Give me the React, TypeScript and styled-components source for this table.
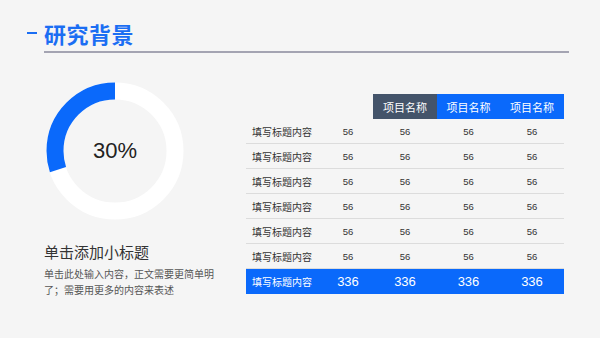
import { Fragment } from 'react';
import styled, { createGlobalStyle } from 'styled-components';

const GlobalStyle = createGlobalStyle`
  html, body {
    margin: 0;
    padding: 0;
    background: #f5f5f5;
  }
  body {
    width: 600px;
    height: 338px;
    overflow: hidden;
    font-family: 'Liberation Sans', 'Noto Sans CJK SC', sans-serif;
  }
`;

const Slide = styled.div`
  width: 600px;
  height: 338px;
  box-sizing: border-box;
  padding: 18px 31px 0 27px;
  display: flex;
  flex-direction: column;
`;

const Header = styled.div`
  display: flex;
  align-items: center;
  gap: 7px;
  height: 30px;
`;

const Dash = styled.div`
  width: 10px;
  height: 2px;
  background: #1b6ef3;
`;

const Title = styled.h1`
  margin: 0;
  font-family: 'Noto Sans CJK SC', sans-serif;
  font-size: 22px;
  font-weight: 700;
  color: #1b6ef3;
  letter-spacing: 0.5px;
  line-height: 30px;
`;

const Rule = styled.div`
  margin: 3px 0 0 17px;
  height: 2px;
  background: #a4a4b2;
`;

const Body = styled.div`
  display: flex;
  align-items: flex-start;
  margin-top: 29px;
`;

const LeftCol = styled.div`
  width: 219px;
  display: flex;
  flex-direction: column;
`;

const Donut = styled.div`
  position: relative;
  width: 138px;
  height: 138px;
  margin: 0 0 0 19px;
`;

const DonutLabel = styled.div`
  position: absolute;
  inset: 0;
  display: flex;
  align-items: center;
  justify-content: center;
  font-size: 22px;
  color: #222;
`;

const SubTitle = styled.div`
  margin: 22px 0 0 17px;
  font-family: 'Noto Sans CJK SC', sans-serif;
  font-size: 15px;
  color: #333;
  line-height: 20px;
`;

const Para = styled.p`
  margin: 4px 0 0 17px;
  width: 176px;
  font-family: 'Noto Sans CJK SC', sans-serif;
  font-size: 10px;
  line-height: 16px;
  color: #555;
`;

const Table = styled.div`
  margin-top: 12px;
  width: 318px;
  display: grid;
  grid-template-columns: 77px 50px 64px 63px 64px;
  grid-auto-rows: 25px;
`;

type Kind = 'head' | 'dark' | 'blue' | 'label' | 'num' | 'total' | 'totalNum';

const Cell = styled.div<{ $kind?: Kind; $line?: boolean }>`
  height: 25px;
  box-sizing: border-box;
  display: flex;
  align-items: center;
  justify-content: ${(p) => (p.$kind === 'label' || p.$kind === 'total' ? 'flex-start' : 'center')};
  padding-left: ${(p) => (p.$kind === 'label' || p.$kind === 'total' ? '6px' : '0')};
  font-family: 'Noto Sans CJK SC', sans-serif;
  font-size: 10px;
  color: #333;
  border-bottom: ${(p) => (p.$line ? '1px solid #dcdcdc' : 'none')};
  ${(p) => p.$kind === 'num' && `font-family: 'Liberation Sans', sans-serif; font-size: 9.5px; color: #333;`}
  ${(p) => p.$kind === 'dark' && `background: #44546a; color: #fff; font-size: 11px;`}
  ${(p) => p.$kind === 'blue' && `background: #0a69fb; color: #fff; font-size: 11px;`}
  ${(p) => p.$kind === 'total' && `background: #0a69fb; color: #fff;`}
  ${(p) => p.$kind === 'totalNum' && `background: #0a69fb; color: #fff; font-family: 'Liberation Sans', sans-serif; font-size: 13px;`}
`;

const DonutChart = ({ value }: { value: number }) => {
  const r = 60;
  const c = 2 * Math.PI * r;
  return (
    <Donut>
      <svg width="138" height="138" viewBox="0 0 138 138">
        <circle cx="69" cy="69" r={r} fill="none" stroke="#ffffff" strokeWidth="17" />
        <circle
          cx="69"
          cy="69"
          r={r}
          fill="none"
          stroke="#0a69fb"
          strokeWidth="17"
          strokeDasharray={`${c * value} ${c}`}
          transform="translate(138 0) scale(-1 1) rotate(-90 69 69)"
        />
      </svg>
      <DonutLabel>{Math.round(value * 100)}%</DonutLabel>
    </Donut>
  );
};

const rows = Array.from({ length: 6 }, () => ({ label: '填写标题内容', values: ['56', '56', '56', '56'] }));

export default function App() {
  return (
    <>
      <GlobalStyle />
      <Slide>
        <Header>
          <Dash />
          <Title>研究背景</Title>
        </Header>
        <Rule />
        <Body>
          <LeftCol>
            <DonutChart value={0.3} />
            <SubTitle>单击添加小标题</SubTitle>
            <Para>单击此处输入内容，正文需要更简单明了；需要用更多的内容来表述</Para>
          </LeftCol>
          <Table>
            <Cell $kind="head" />
            <Cell $kind="head" />
            <Cell $kind="dark">项目名称</Cell>
            <Cell $kind="blue">项目名称</Cell>
            <Cell $kind="blue">项目名称</Cell>
            {rows.map((row, i) => (
              <Fragment key={i}>
                <Cell $kind="label" $line>
                  {row.label}
                </Cell>
                {row.values.map((v, j) => (
                  <Cell key={j} $kind="num" $line>
                    {v}
                  </Cell>
                ))}
              </Fragment>
            ))}
            <Cell $kind="total">填写标题内容</Cell>
            {['336', '336', '336', '336'].map((v, j) => (
              <Cell key={j} $kind="totalNum">
                {v}
              </Cell>
            ))}
          </Table>
        </Body>
      </Slide>
    </>
  );
}
